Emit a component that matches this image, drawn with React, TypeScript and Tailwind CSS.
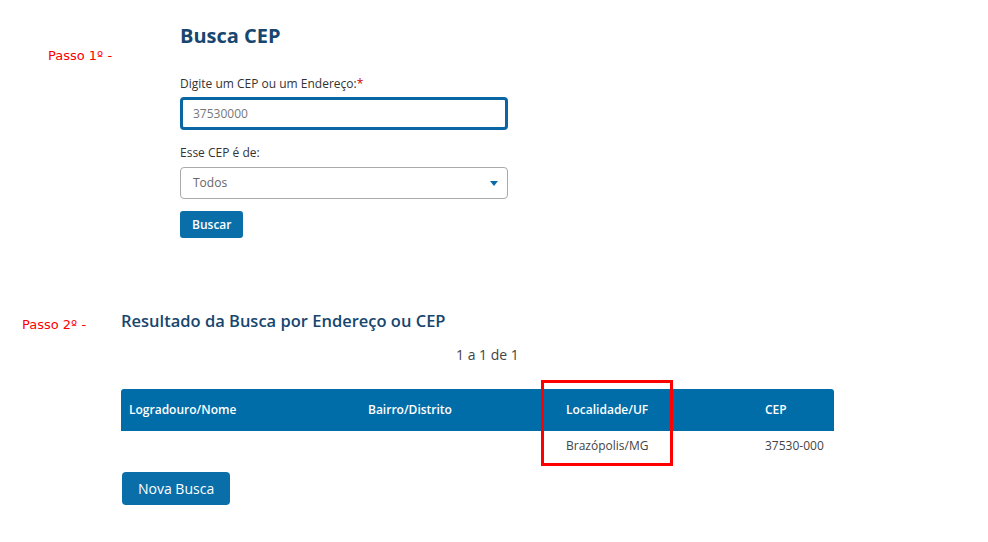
const cols = [
  { label: "Logradouro/Nome", value: "", w: "w-[239px]" },
  { label: "Bairro/Distrito", value: "", w: "w-[198px]" },
  { label: "Localidade/UF", value: "Brazópolis/MG", w: "w-[199px]" },
  { label: "CEP", value: "37530-000", w: "flex-1" },
] as const

export default function App() {
  return (
    <div className="min-h-[542px] w-[988px] bg-white font-['Open_Sans',sans-serif] text-[#333]">
      {/* passo 1 */}
      <div className="flex pt-[22px]">
        <div className="w-[180px] shrink-0 pl-[48px] pt-[26px] font-['DejaVu_Sans',sans-serif] text-[13px] leading-[16px] text-[#f00]">
          Passo 1º -
        </div>
        <div className="w-[328px]">
          <h1 className="text-[20px] font-bold leading-[28px] text-[#17466f]">Busca CEP</h1>
          <label className="mt-[26px] block text-[12px] leading-[16px]">
            Digite um CEP ou um Endereço:<span className="text-[#c00]">*</span>
          </label>
          <div className="mt-[5px] flex h-[33px] items-center rounded-[4px] border-[3px] border-[#0a67a3] px-[10px] text-[12px] text-[#777]">
            37530000
          </div>
          <label className="mt-[15px] block text-[12px] leading-[16px]">Esse CEP é de:</label>
          <div className="mt-[6px] flex h-[32px] items-center justify-between rounded-[4px] border border-[#aaa] pl-[12px] pr-[9px] text-[12px] text-[#666]">
            <span>Todos</span>
            <svg width="8" height="5" viewBox="0 0 8 5">
              <path d="M0 0h8L4 5z" fill="#0a6aa8" />
            </svg>
          </div>
          <button className="mt-[12px] h-[27px] rounded-[3px] bg-[#0a6ea9] px-[12px] text-[12px] font-semibold text-white">
            Buscar
          </button>
        </div>
      </div>

      {/* passo 2 */}
      <div className="mt-[70px] flex">
        <div className="w-[121px] shrink-0 pl-[22px] pt-[9px] font-['DejaVu_Sans',sans-serif] text-[13px] leading-[16px] text-[#f00]">
          Passo 2º -
        </div>
        <div className="w-[713px]">
          <h2 className="pt-[2px] text-[16.5px] font-semibold leading-[22px] text-[#17466f]">
            Resultado da Busca por Endereço ou CEP
          </h2>
          <p className="mt-[13px] pl-[335px] text-[14px] leading-[20px] text-[#444]">1 a 1 de 1</p>
          <div className="relative mt-[24px]">
            <div className="flex h-[42px] items-center rounded-t-[3px] bg-[#006da9] text-[12px] font-semibold text-white">
              {cols.map((c) => (
                <div key={c.label} className={`${c.w} pl-[8px]`}>
                  {c.label}
                </div>
              ))}
            </div>
            <div className="flex h-[29px] items-center text-[12px] text-[#444]">
              {cols.map((c) => (
                <div key={c.label} className={`${c.w} pl-[8px]`}>
                  {c.value}
                </div>
              ))}
            </div>
            <div className="absolute left-[420px] top-[-9px] h-[86px] w-[132px] border-[3px] border-[#f00]" />
          </div>
          <button className="mt-[12px] ml-[1px] h-[33px] rounded-[4px] bg-[#0a6ea9] px-[16px] text-[14px] text-white">
            Nova Busca
          </button>
        </div>
      </div>
    </div>
  )
}
